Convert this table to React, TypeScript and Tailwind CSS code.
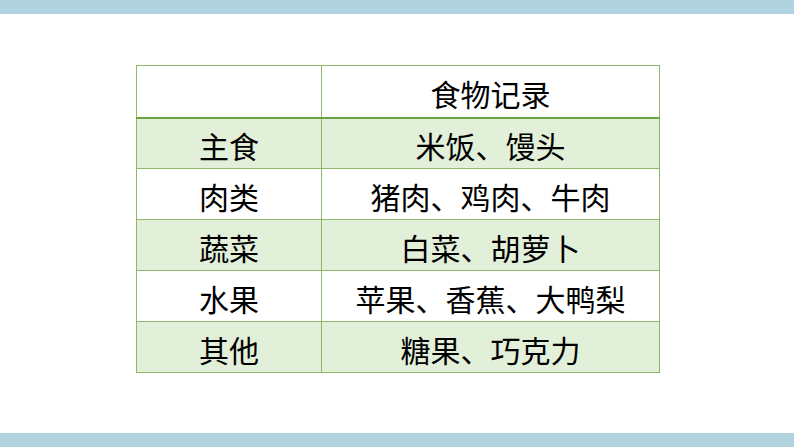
import React from "react";

const rows: [string, string][] = [
  ["主食", "米饭、馒头"],
  ["肉类", "猪肉、鸡肉、牛肉"],
  ["蔬菜", "白菜、胡萝卜"],
  ["水果", "苹果、香蕉、大鸭梨"],
  ["其他", "糖果、巧克力"],
];

export default function App() {
  return (
    <div
      className="w-[794px] h-[447px] bg-white flex flex-col overflow-hidden"
      style={{ fontFamily: '"Noto Sans CJK SC", "Noto Sans", sans-serif' }}
    >
      <div className="h-[14px] bg-[#b1d3df] shrink-0" />
      <div className="flex-1 pt-[51px] pl-[136px]">
        <table className="border-collapse w-[524px] text-[30px] text-black leading-none">
          <tbody>
            <tr className="h-[52px] bg-white">
              <td className="w-[185px] border border-[#8db86a] border-b-2 border-b-[#6aa53f]"></td>
              <td className="border border-[#8db86a] border-b-2 border-b-[#6aa53f] text-center pt-[3px]">食物记录</td>
            </tr>
            {rows.map(([a, b], i) => (
              <tr key={a} className={i % 2 === 0 ? "h-[51px] bg-[#e2efd9]" : "h-[51px] bg-white"}>
                <td className="border border-[#8db86a] text-center pt-[3px]">{a}</td>
                <td className="border border-[#8db86a] text-center pt-[3px]">{b}</td>
              </tr>
            ))}
          </tbody>
        </table>
      </div>
      <div className="h-[14px] bg-[#b1d3df] shrink-0" />
    </div>
  );
}
